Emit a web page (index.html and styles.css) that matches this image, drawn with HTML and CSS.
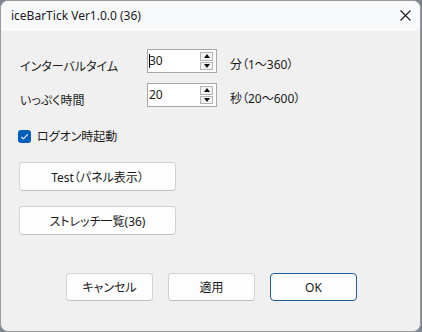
FILE: index.html
```html
<!DOCTYPE html>
<html lang="ja">
<head>
  <meta charset="UTF-8">
  <title>iceBarTick Ver1.0.0 (36)</title>
  <link rel="stylesheet" href="styles.css">
</head>
<body>
  <div class="window">
    <div class="titlebar">
      <span class="title">iceBarTick Ver1.0.0 (36)</span>
      <svg class="close" width="11" height="11" viewBox="0 0 11 11">
        <path d="M0.5 0.5 L10.5 10.5 M10.5 0.5 L0.5 10.5" stroke="#1a1a1a" stroke-width="1.1" fill="none"/>
      </svg>
    </div>

    <div class="content">
      <div class="field">
        <label class="field-label">インターバルタイム</label>
        <div class="spin">
          <span class="spin-value"><span class="caret"></span>30</span>
          <span class="spin-buttons">
            <span class="spin-btn"><span class="arrow-up"></span></span>
            <span class="spin-btn"><span class="arrow-down"></span></span>
          </span>
        </div>
        <span class="unit">分（1〜360）</span>
      </div>

      <div class="field">
        <label class="field-label">いっぷく時間</label>
        <div class="spin">
          <span class="spin-value">20</span>
          <span class="spin-buttons">
            <span class="spin-btn"><span class="arrow-up"></span></span>
            <span class="spin-btn"><span class="arrow-down"></span></span>
          </span>
        </div>
        <span class="unit">秒（20〜600）</span>
      </div>

      <label class="check">
        <span class="check-box">
          <svg width="13" height="13" viewBox="0 0 13 13">
            <path d="M3.3 6.8 L5.4 8.8 L9.7 4.4" stroke="#fff" stroke-width="1.1" fill="none"/>
          </svg>
        </span>
        ログオン時起動
      </label>

      <button class="btn btn-wide btn-test">Test（パネル表示）</button>
      <button class="btn btn-wide">ストレッチ一覧(36)</button>

      <div class="actions">
        <button class="btn btn-small">キャンセル</button>
        <button class="btn btn-small">適用</button>
        <button class="btn btn-small btn-default">OK</button>
      </div>
    </div>
  </div>
</body>
</html>
```

FILE: styles.css
```css
html {
  background: #7d8590;
}
body {
  margin: 0;
  font-family: "Noto Sans", "Noto Sans CJK JP", sans-serif;
  font-size: 12px;
  color: #1b1b1b;
  font-feature-settings: "palt";
}
.window {
  width: 421px;
  height: 332px;
  box-sizing: border-box;
  border: 1px solid #9a9a9a;
  border-radius: 8px;
  background: #f0f0f0;
  overflow: hidden;
  display: flex;
  flex-direction: column;
}
.titlebar {
  height: 30px;
  background: #f8f9fb;
  display: flex;
  align-items: center;
  justify-content: space-between;
  padding: 0 9px 0 10px;
  flex-shrink: 0;
}
.title {
  font-size: 12px;
  color: #1a1a1a;
  margin-top: -1px;
}
.close {
  display: block;
  margin-top: -1px;
}
.content {
  padding: 18px 0 0 19px;
  display: flex;
  flex-direction: column;
}
.field {
  display: flex;
  align-items: center;
  height: 24px;
  margin-bottom: 10px;
}
.field-label {
  width: 127px;
  padding-top: 9px;
}
.spin {
  width: 70px;
  height: 24px;
  box-sizing: border-box;
  border: 1px solid #a8a8a8;
  background: #fff;
  display: flex;
  justify-content: space-between;
  padding: 2px 3px 2px 0;
}
.spin-value {
  position: relative;
  padding: 1px 0 0 1px;
  line-height: 16px;
  font-size: 12px;
}
.caret {
  position: absolute;
  left: 1px;
  top: 2px;
  width: 1px;
  height: 14px;
  background: #000;
}
.spin-buttons {
  display: flex;
  flex-direction: column;
  gap: 1px;
  width: 13px;
}
.spin-btn {
  flex: 1;
  border: 1px solid #b4b4b4;
  background: #f4f4f4;
  display: flex;
  align-items: center;
  justify-content: center;
}
.arrow-up {
  border-left: 3px solid transparent;
  border-right: 3px solid transparent;
  border-bottom: 4px solid #111;
}
.arrow-down {
  border-left: 3px solid transparent;
  border-right: 3px solid transparent;
  border-top: 4px solid #111;
}
.unit {
  margin-left: 13px;
  padding-top: 6px;
}
.check {
  display: flex;
  align-items: center;
  gap: 6px;
  margin: 10px 0 0 -2px;
}
.check-box {
  width: 13px;
  height: 13px;
  border-radius: 3px;
  background: #005fb8;
}
.check-box svg {
  display: block;
}
.btn {
  font-family: inherit;
  font-size: 12px;
  color: #1b1b1b;
  background: #fdfdfd;
  border: 1px solid #d2d2d2;
  border-bottom-color: #c0c0c0;
  border-radius: 4px;
  padding: 0;
  font-feature-settings: "palt";
}
.btn-wide {
  width: 157px;
  height: 29px;
  margin: 15px 0 0 -1px;
}
.btn-test {
  margin-top: 17px;
}
.actions {
  display: flex;
  gap: 15px;
  margin: 38px 0 0 46px;
}
.btn-small {
  width: 87px;
  height: 28px;
}
.btn-default {
  border: 1px solid #1f5f95;
}
```
